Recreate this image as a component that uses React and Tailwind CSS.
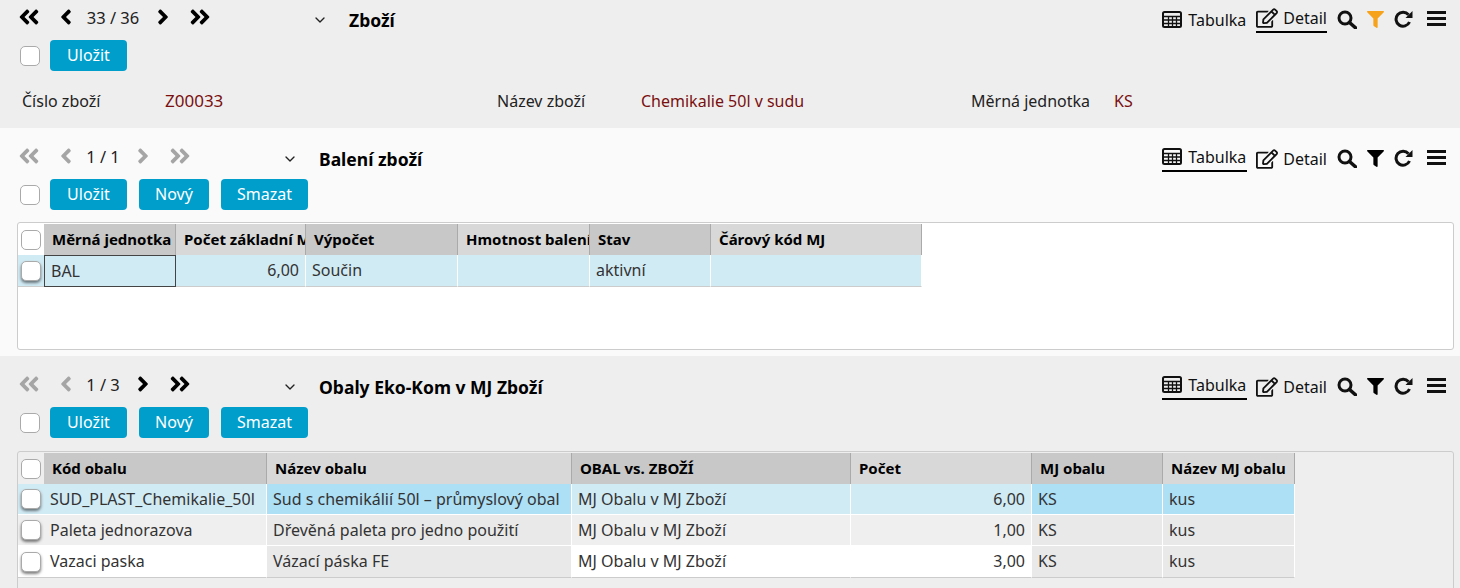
import { FaAngleDoubleLeft, FaAngleDoubleRight, FaAngleLeft, FaAngleRight, FaRegEdit, FaFilter } from 'react-icons/fa';
import { ChevronDown } from 'lucide-react';

const Check = ({ shadow }) => (
    <span className={`block w-5 h-5 bg-white rounded-[5px] border border-[#aaa] ${shadow ? 'shadow-[0_2px_3px_rgba(0,0,0,0.5)]' : ''}`}></span>
);

const Btn = ({ children, width }) => (
    <button className={`h-[31px] ${width} bg-[#009ecb] text-white rounded-[4px] text-[16px] leading-[31px] text-center`}>{children}</button>
);

const TableIcon = () => (
    <svg width="20" height="17" viewBox="0 0 20 17" fill="none" stroke="currentColor">
        <rect x="1" y="1" width="18" height="15" rx="1.5" strokeWidth="2" />
        <path d="M1 5.5h18M1 9h18M1 12.5h18M6.5 5v11M10.5 5v11M14.5 5v11" strokeWidth="1.3" />
    </svg>
);

const SearchIcon = () => (
    <svg width="20" height="19" viewBox="0 0 20 19" fill="none" stroke="currentColor" className="ml-[10px] mt-[5px]">
        <circle cx="8" cy="8" r="6" strokeWidth="3" />
        <path d="M12.5 12.5L18.5 17.8" strokeWidth="3.5" strokeLinecap="round" />
    </svg>
);

const RedoIcon = () => (
    <svg width="19" height="18" viewBox="0 0 19 18" fill="none" className="ml-[10px] mt-[5px]">
        <path d="M14.5 4.8A7 7 0 1 0 15.5 12" stroke="currentColor" strokeWidth="3" />
        <path d="M11.5 8H18.5V1Z" fill="currentColor" />
    </svg>
);

const BarsIcon = () => (
    <svg width="19" height="15" viewBox="0 0 19 15" className="ml-[14px] mt-[6px]" fill="currentColor">
        <rect y="0" width="19" height="3" />
        <rect y="6" width="19" height="3" />
        <rect y="12" width="19" height="3" />
    </svg>
);

const Pager = ({ text, muted, mutedNext, pagerWidth }) => {
    const back = muted ? 'text-[#a5a5a5]' : 'text-black';
    const next = mutedNext ? 'text-[#a5a5a5]' : 'text-black';
    return (
        <div className={`flex items-center h-6 -ml-px text-[#222] ${pagerWidth}`}>
            <FaAngleDoubleLeft size={24} className={back} />
            <FaAngleLeft size={24} className={`ml-[13px] ${back}`} />
            <span className="flex-1 text-center text-[16.5px] pr-[3px] mt-[3px] whitespace-nowrap">{text}</span>
            <FaAngleRight size={24} className={next} />
            <FaAngleDoubleRight size={24} className={`ml-[13px] ${next}`} />
        </div>
    );
};

const Tools = ({ active, filterOn }) => (
    <div className="flex items-start ml-auto text-[#111] text-[16px]">
        <div className={`flex items-center gap-[6px] pr-px ${active === 'table' ? 'border-b-2 border-black h-[28px] pb-px' : 'h-[25px] mt-[2px]'}`}>
            <TableIcon />
            <span>Tabulka</span>
        </div>
        <div className={`flex items-center gap-[5px] ml-[9px] ${active === 'detail' ? 'border-b-2 border-black h-[28px] pb-px' : 'h-[25px] mt-[2px]'}`}>
            <FaRegEdit size={22} />
            <span>Detail</span>
        </div>
        <SearchIcon />
        <FaFilter size={17} className={`ml-[10px] mt-[6px] ${filterOn ? 'text-[#f7a21b]' : 'text-black'}`} />
        <RedoIcon />
        <BarsIcon />
    </div>
);

const Head = ({ children, alt }) => (
    <th className={`h-[31px] pl-[8px] text-left text-[15px] font-bold text-black overflow-hidden whitespace-nowrap border-r border-[#aaa] ${alt ? 'bg-[#d8d8d8]' : 'bg-[#c8c8c8]'}`}>{children}</th>
);

const Cell = ({ children, right, bg, line }) => (
    <td className={`px-[6px] text-[16px] text-[#333] overflow-hidden whitespace-nowrap border-r border-white border-b ${line ? 'h-[32px] pb-px border-b-[#ccc]' : 'h-[31px]'} ${right ? 'text-right' : 'text-left'} ${bg}`}>{children}</td>
);

const balHead = ['Měrná jednotka', 'Počet základní MJ', 'Výpočet', 'Hmotnost balení', 'Stav', 'Čárový kód MJ'];
const obalHead = ['Kód obalu', 'Název obalu', 'OBAL vs. ZBOŽÍ', 'Počet', 'MJ obalu', 'Název MJ obalu'];

const obalRows = [
    { cells: ['SUD_PLAST_Chemikalie_50l', 'Sud s chemikálií 50l – průmyslový obal', 'MJ Obalu v MJ Zboží', '6,00', 'KS', 'kus'], odd: 'bg-[#d1ebf5]', even: 'bg-[#addff5]' },
    { cells: ['Paleta jednorazova', 'Dřevěná paleta pro jedno použití', 'MJ Obalu v MJ Zboží', '1,00', 'KS', 'kus'], odd: 'bg-[#efefef]', even: 'bg-[#e9e9e9]' },
    { cells: ['Vazaci paska', 'Vázací páska FE', 'MJ Obalu v MJ Zboží', '3,00', 'KS', 'kus'], odd: 'bg-white', even: 'bg-[#e9e9e9]', line: true },
];

// Kód, OBAL and Počet carry the lighter tint of the row
const isDarkCol = (i) => i === 1 || i === 4 || i === 5;

export default function App() {
    return (
        <div className="w-[1460px] h-[588px] overflow-hidden font-['Noto_Sans',sans-serif]">
            <section className="h-[128px] bg-[#eeeeee] pl-[18px] pr-[14px] pt-[5px]">
                <div className="flex items-start h-[35px]">
                    <Pager text="33 / 36" pagerWidth="w-[195px]" />
                    <ChevronDown size={16} className="ml-[100px] mt-[7px] text-[#222]" />
                    <h2 className="ml-[21px] mt-[2px] text-[17.5px] font-bold text-black">Zboží</h2>
                    <Tools active="detail" filterOn />
                </div>
                <div className="flex items-center gap-[10px] ml-[2px]">
                    <Check />
                    <Btn width="w-[77px]">Uložit</Btn>
                </div>
                <div className="flex items-center h-6 mt-[18px] ml-[4px] text-[16px] text-[#222]">
                    <span className="w-[143px]">Číslo zboží</span>
                    <span className="w-[332px] text-[17px] text-[#7a0f0f]">Z00033</span>
                    <span className="w-[144px]">Název zboží</span>
                    <span className="w-[330px] text-[#7a0f0f]">Chemikalie 50l v sudu</span>
                    <span className="w-[143px]">Měrná jednotka</span>
                    <span className="text-[#7a0f0f]">KS</span>
                </div>
            </section>

            <section className="h-[228px] bg-[#fafafa] pl-[18px] pr-[14px] pt-[16px]">
                <div className="flex items-start h-[35px]">
                    <Pager text="1 / 1" muted mutedNext pagerWidth="w-[175px]" />
                    <ChevronDown size={16} className="ml-[90px] mt-[7px] text-[#222]" />
                    <h2 className="ml-[21px] mt-[2px] text-[17.5px] font-bold text-black">Balení zboží</h2>
                    <Tools active="table" />
                </div>
                <div className="flex items-center gap-[10px] ml-[2px]">
                    <Check />
                    <div className="flex gap-3">
                        <Btn width="w-[77px]">Uložit</Btn>
                        <Btn width="w-[70px]">Nový</Btn>
                        <Btn width="w-[87px]">Smazat</Btn>
                    </div>
                </div>
                <div className="mt-[12px] -ml-px w-[1437px] h-[128px] bg-white border border-[#ccc] rounded-[3px] pt-px">
                    <table className="table-fixed border-separate border-spacing-0 w-[904px]">
                        <colgroup>
                            <col className="w-[26px]" /><col className="w-[132px]" /><col className="w-[130px]" /><col className="w-[152px]" /><col className="w-[132px]" /><col className="w-[121px]" /><col className="w-[211px]" />
                        </colgroup>
                        <thead>
                            <tr>
                                <th className="pl-[3px]"><Check /></th>
                                {balHead.map((h, i) => <Head key={h} alt={i % 2 === 1}>{h}</Head>)}
                            </tr>
                        </thead>
                        <tbody>
                            <tr>
                                <td className="pl-[3px] bg-[#d1ebf5] border-b border-[#ccc]"><Check shadow /></td>
                                <td className="h-[32px] pb-px px-[6px] text-[16px] text-[#333] bg-[#d1ebf5] border border-[#444]">BAL</td>
                                <Cell right line bg="bg-[#d1ebf5]">6,00</Cell>
                                <Cell line bg="bg-[#d1ebf5]">Součin</Cell>
                                <Cell line bg="bg-[#d1ebf5]"></Cell>
                                <Cell line bg="bg-[#d1ebf5]">aktivní</Cell>
                                <Cell line bg="bg-[#d1ebf5]"></Cell>
                            </tr>
                        </tbody>
                    </table>
                </div>
            </section>

            <section className="h-[232px] bg-[#eeeeee] pl-[18px] pr-[14px] pt-[16px]">
                <div className="flex items-start h-[35px]">
                    <Pager text="1 / 3" muted pagerWidth="w-[175px]" />
                    <ChevronDown size={16} className="ml-[90px] mt-[7px] text-[#222]" />
                    <h2 className="ml-[21px] mt-[2px] text-[17.5px] font-bold text-black">Obaly Eko-Kom v MJ Zboží</h2>
                    <Tools active="table" />
                </div>
                <div className="flex items-center gap-[10px] ml-[2px]">
                    <Check />
                    <div className="flex gap-3">
                        <Btn width="w-[77px]">Uložit</Btn>
                        <Btn width="w-[70px]">Nový</Btn>
                        <Btn width="w-[87px]">Smazat</Btn>
                    </div>
                </div>
                <div className="mt-[13px] -ml-px w-[1437px] h-[160px] border border-[#ccc] rounded-[3px] pt-px">
                    <table className="table-fixed border-separate border-spacing-0 w-[1277px]">
                        <colgroup>
                            <col className="w-[26px]" /><col className="w-[223px]" /><col className="w-[305px]" /><col className="w-[279px]" /><col className="w-[181px]" /><col className="w-[131px]" /><col className="w-[132px]" />
                        </colgroup>
                        <thead>
                            <tr>
                                <th className="pl-[3px]"><Check /></th>
                                {obalHead.map((h, i) => <Head key={h} alt={i % 2 === 1}>{h}</Head>)}
                            </tr>
                        </thead>
                        <tbody>
                            {obalRows.map((r) => (
                                <tr key={r.cells[0]}>
                                    <td className={`pl-[3px] border-b ${r.line ? 'border-[#ccc]' : 'border-white'} ${r.odd}`}><Check shadow /></td>
                                    {r.cells.map((c, i) => (
                                        <Cell key={i} right={i === 3} line={r.line} bg={isDarkCol(i) ? r.even : r.odd}>{c}</Cell>
                                    ))}
                                </tr>
                            ))}
                        </tbody>
                    </table>
                </div>
            </section>
        </div>
    );
}
